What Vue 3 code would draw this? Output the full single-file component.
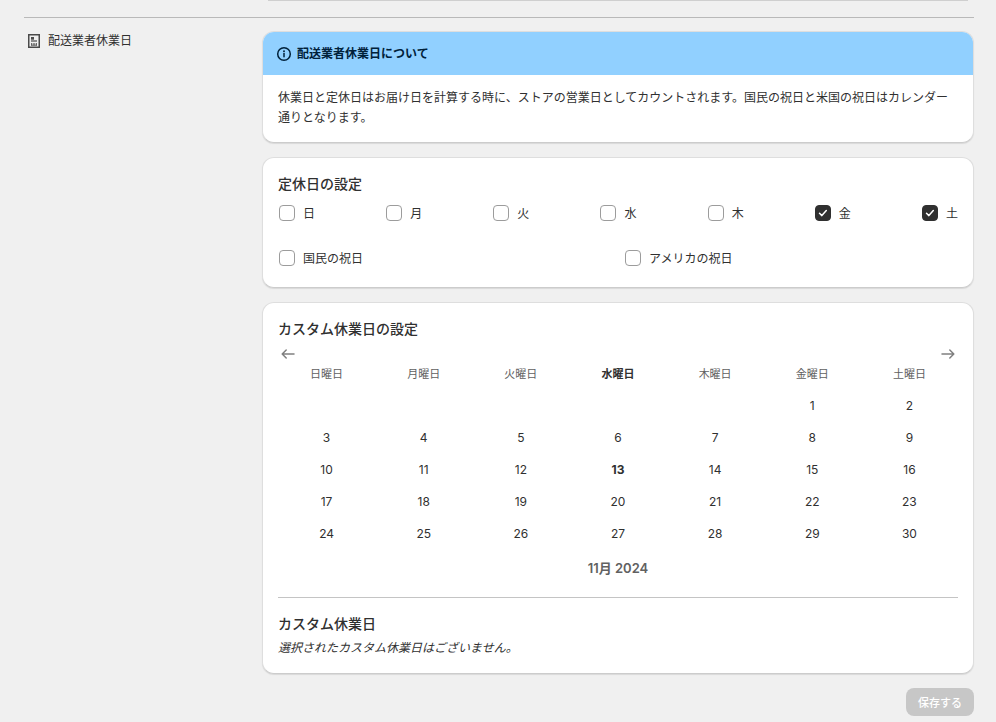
<script setup>
import { ref } from 'vue'

const weekly = ref([
  { id: 'sun', label: '日', checked: false },
  { id: 'mon', label: '月', checked: false },
  { id: 'tue', label: '火', checked: false },
  { id: 'wed', label: '水', checked: false },
  { id: 'thu', label: '木', checked: false },
  { id: 'fri', label: '金', checked: true },
  { id: 'sat', label: '土', checked: true },
])
const national = ref([
  { id: 'jp', label: '国民の祝日', checked: false },
  { id: 'us', label: 'アメリカの祝日', checked: false },
])
const weekdays = ['日曜日', '月曜日', '火曜日', '水曜日', '木曜日', '金曜日', '土曜日']
const today = 13
const firstWeekday = 5
const daysInMonth = 30
const weeks = Array.from({ length: 5 }, (_, w) =>
  Array.from({ length: 7 }, (_, d) => {
    const day = w * 7 + d - firstWeekday + 1
    return day > 0 && day <= daysInMonth ? day : null
  })
)
</script>

<template>
  <main class="page">
    <div class="previous"></div>
    <section class="section">
      <header class="section-head">
        <svg class="head-icon" viewBox="0 0 12 14" aria-hidden="true">
          <rect x="0.75" y="0.75" width="10.5" height="12.5" fill="none" stroke="#4a4a4a" stroke-width="1.5" />
          <path d="M3 3h3v2.700H3z" fill="#4a4a4a" />
          <path d="M3 7h6" stroke="#4a4a4a" stroke-width="1.200" />
          <path d="M3.500 9v2.500M5.200 9v2.500M6.800 9v2.500M8.500 9v2.500M3 11.200h6" stroke="#4a4a4a" stroke-width="0.800" />
        </svg>
        <h2 class="head-title">配送業者休業日</h2>
      </header>

      <div class="content">
        <article class="card">
          <div class="banner">
            <svg class="info-icon" viewBox="0 0 16 16" aria-hidden="true">
              <circle cx="8" cy="8" r="6.300" fill="none" stroke="#00213a" stroke-width="1.500" />
              <path d="M8 7.500v3.300" stroke="#00213a" stroke-width="1.500" stroke-linecap="round" />
              <circle cx="8" cy="5.200" r="0.950" fill="#00213a" />
            </svg>
            <h3 class="banner-title">配送業者休業日について</h3>
          </div>
          <p class="banner-text">休業日と定休日はお届け日を計算する時に、ストアの営業日としてカウントされます。国民の祝日と米国の祝日はカレンダー通りとなります。</p>
        </article>

        <article class="card padded">
          <h3 class="title">定休日の設定</h3>
          <div class="weekly">
            <label v-for="d in weekly" :key="d.id" class="choice">
              <input v-model="d.checked" type="checkbox" class="box" />
              <svg class="tick" viewBox="0 0 16 16" aria-hidden="true"><path d="M4.500 8.300 6.900 10.600 11.300 5.600" /></svg>
              <span class="choice-text">{{ d.label }}</span>
            </label>
          </div>
          <div class="national">
            <label v-for="d in national" :key="d.id" class="choice">
              <input v-model="d.checked" type="checkbox" class="box" />
              <svg class="tick" viewBox="0 0 16 16" aria-hidden="true"><path d="M4.500 8.300 6.900 10.600 11.300 5.600" /></svg>
              <span class="choice-text">{{ d.label }}</span>
            </label>
          </div>
        </article>

        <article class="card padded">
          <h3 class="title">カスタム休業日の設定</h3>
          <div class="nav">
            <button type="button" class="arrow" aria-label="前の月">
              <svg viewBox="0 0 20 20"><path d="M16 10H4.500M8.200 6 4.200 10l4 4" /></svg>
            </button>
            <button type="button" class="arrow" aria-label="次の月">
              <svg viewBox="0 0 20 20"><path d="M4 10h11.500M11.800 6l4 4-4 4" /></svg>
            </button>
          </div>
          <table class="calendar">
            <caption>11月 2024</caption>
            <thead>
              <tr>
                <th v-for="(w, i) in weekdays" :key="w" scope="col" :class="{ current: i === 3 }">{{ w }}</th>
              </tr>
            </thead>
            <tbody>
              <tr v-for="(week, i) in weeks" :key="i">
                <td v-for="(day, j) in week" :key="j">
                  <button v-if="day" type="button" class="day" :class="{ today: day === today }">{{ day }}</button>
                </td>
              </tr>
            </tbody>
          </table>
          <hr class="rule" />
          <h3 class="title">カスタム休業日</h3>
          <p class="empty">選択されたカスタム休業日はございません。</p>
        </article>

        <div class="actions">
          <button type="button" class="save" disabled>保存する</button>
        </div>
      </div>
    </section>
  </main>
</template>

<style>
body {
  background: #f0f0f0;
}
</style>

<style scoped>
.page {
  padding: 0 22px 6px 24px;
  overflow: hidden;
  color: #303030;
  font-family: Inter, "Noto Sans CJK JP", sans-serif;
  font-size: 12px;
  line-height: 20px;
}
.page * {
  box-sizing: border-box;
}
h2, h3, p {
  margin: 0;
}
button {
  font-family: inherit;
}
.previous {
  height: 1px;
  margin: 0 6px 16px 244px;
  background: #cfcfcf;
}
.section {
  display: grid;
  grid-template-columns: 224px minmax(0, 1fr);
  gap: 14px;
  border-top: 1px solid #b9b9b9;
  padding-top: 13px;
}
.section-head {
  display: flex;
  align-items: center;
  align-self: start;
  gap: 8px;
  padding-left: 4px;
}
.head-icon {
  width: 12px;
  height: 14px;
}
.head-title {
  font-size: 12px;
  font-weight: 400;
}
.content {
  display: flex;
  flex-direction: column;
  gap: 14px;
}
.card {
  overflow: hidden;
  border: 1px solid #dedede;
  border-bottom-color: #cccccc;
  border-radius: 12px;
  background: #fff;
  box-shadow: 0 1px 1px #d9d9d9;
}
.padded {
  padding: 16px 15px 15px;
}
.banner {
  display: flex;
  align-items: center;
  gap: 5px;
  margin: -1px -1px 0;
  padding: 13px 14px 11px;
  border-radius: 12px 12px 0 0;
  background: #91d0ff;
  color: #00213a;
}
.info-icon {
  width: 16px;
  height: 16px;
}
.banner-title {
  font-size: 12px;
  font-weight: 600;
}
.banner-text {
  padding: 13px 15px 14px;
}
.title {
  font-size: 14px;
  font-weight: 500;
  line-height: 20px;
}
.weekly {
  display: flex;
  justify-content: space-between;
  margin-top: 8px;
}
.national {
  display: grid;
  grid-template-columns: 1fr 1fr;
  gap: 12px;
  margin: 23px 0 3px;
}
.choice {
  position: relative;
  display: flex;
  align-items: center;
  justify-self: start;
  gap: 8px;
  padding-left: 1px;
}
.choice-text {
  padding-top: 2px;
}
.box {
  appearance: none;
  width: 16px;
  height: 16px;
  margin: 0;
  border: 1px solid #9c9c9c;
  border-radius: 4px;
  background: #fff;
}
.box:checked {
  border-color: #303030;
  background: #303030;
}
.tick {
  position: absolute;
  left: 1px;
  width: 16px;
  height: 16px;
  fill: none;
  stroke: #fff;
  stroke-width: 1.5;
  stroke-linecap: round;
  stroke-linejoin: round;
  pointer-events: none;
}
.nav {
  display: flex;
  justify-content: space-between;
  margin-top: 5px;
}
.arrow {
  width: 20px;
  height: 20px;
  padding: 0;
  border: 0;
  background: none;
}
.arrow svg {
  display: block;
  width: 20px;
  height: 20px;
  fill: none;
  stroke: #808080;
  stroke-width: 1.5;
  stroke-linecap: round;
  stroke-linejoin: round;
}
.calendar {
  width: 100%;
  table-layout: fixed;
  border-collapse: collapse;
}
.calendar caption {
  caption-side: bottom;
  padding-top: 8px;
  color: #616161;
  font-size: 13px;
  font-weight: 600;
  line-height: 20px;
}
.calendar th {
  height: 20px;
  padding: 0 0 6px;
  color: #616161;
  font-size: 11px;
  font-weight: 400;
  line-height: 20px;
}
.calendar th.current {
  color: #303030;
  font-weight: 600;
}
.calendar td {
  height: 32px;
  padding: 0;
}
.day {
  display: block;
  width: 100%;
  height: 32px;
  padding: 0;
  border: 0;
  background: none;
  color: #303030;
  font-size: 12px;
  line-height: 20px;
}
.day.today {
  font-weight: 700;
}
.rule {
  height: 1px;
  margin: 19px 0 16px;
  border: 0;
  background: #c4c4c4;
}
.empty {
  margin-top: 4px;
  font-style: italic;
}
.actions {
  display: flex;
  justify-content: flex-end;
}
.save {
  height: 28px;
  padding: 0 12px;
  border: 0;
  border-radius: 8px;
  background: #c7c7c7;
  color: #fff;
  font-size: 11px;
  font-weight: 500;
}
</style>
